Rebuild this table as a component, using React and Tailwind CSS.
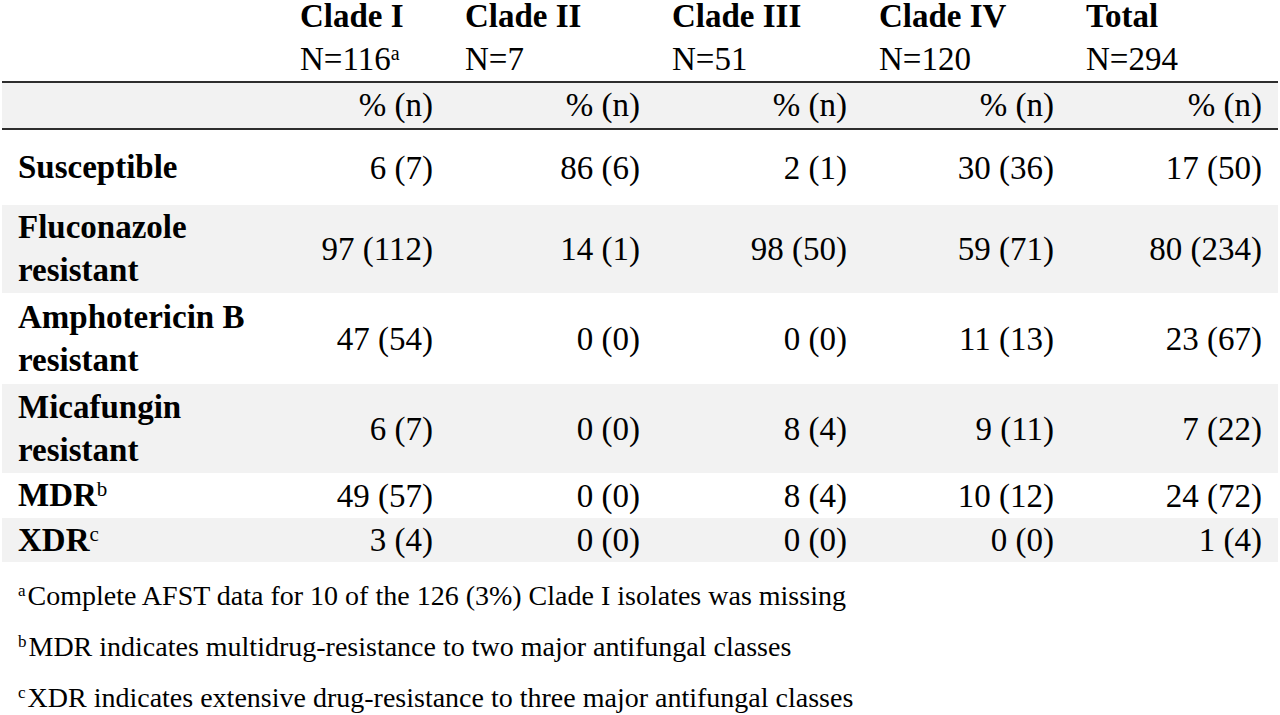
import React from "react";

const cols = ["Clade I", "Clade II", "Clade III", "Clade IV", "Total"];
const ns = ["116", "7", "51", "120", "294"];

const rows = [
  { label: ["Susceptible"], vals: ["6 (7)", "86 (6)", "2 (1)", "30 (36)", "17 (50)"], h: "h-[75px]", bg: "" },
  { label: ["Fluconazole", "resistant"], vals: ["97 (112)", "14 (1)", "98 (50)", "59 (71)", "80 (234)"], h: "h-[88px]", bg: "bg-[#f2f2f2]" },
  { label: ["Amphotericin B", "resistant"], vals: ["47 (54)", "0 (0)", "0 (0)", "11 (13)", "23 (67)"], h: "h-[91px]", bg: "" },
  { label: ["Micafungin", "resistant"], vals: ["6 (7)", "0 (0)", "8 (4)", "9 (11)", "7 (22)"], h: "h-[89px]", bg: "bg-[#f2f2f2]" },
  { label: ["MDR"], sup: "b", vals: ["49 (57)", "0 (0)", "8 (4)", "10 (12)", "24 (72)"], h: "h-[45px]", bg: "" },
  { label: ["XDR"], sup: "c", vals: ["3 (4)", "0 (0)", "0 (0)", "0 (0)", "1 (4)"], h: "h-[44px]", bg: "bg-[#f2f2f2]" },
];

const grid = "grid grid-cols-[282px_165px_207px_207px_207px_208px]";

function Note({ mark, children }) {
  return (
    <div className="whitespace-nowrap">
      <span className="relative -top-[9px] text-[17px] leading-none mr-[2px]">{mark}</span>
      {children}
    </div>
  );
}

export default function App() {
  return (
    <div className="w-[1280px] h-[715px] bg-white text-black overflow-hidden font-['Liberation_Serif','Times_New_Roman',serif]">
      <div className="mx-[2px] w-[1276px] text-[33px]">
        {/* header */}
        <div className={`${grid} h-[81px] pt-[2px]`}>
          <div />
          {cols.map((c, i) => (
            <div key={c} className="pl-4">
              <div className="font-bold leading-[28px] whitespace-nowrap">{c}</div>
              <div className="mt-[15px] leading-[28px] whitespace-nowrap">
                N={ns[i]}
                {i === 0 && <span className="relative -top-[10px] text-[20px] leading-none">a</span>}
              </div>
            </div>
          ))}
        </div>
        <div className={`${grid} h-[49px] bg-[#f2f2f2] border-y-2 border-[#2e2e2e]`}>
          <div />
          {cols.map((c) => (
            <div key={c} className="pr-4 text-right leading-[45px]">% (n)</div>
          ))}
        </div>
        {rows.map((r) => (
          <div key={r.label[0]} className={`${grid} ${r.h} ${r.bg} items-center`}>
            <div className="pl-4 font-bold leading-[43px]">
              {r.label.map((l) => (
                <div key={l} className="whitespace-nowrap">
                  {l}
                  {r.sup && (
                    <span className="relative -top-[10px] text-[21px] font-normal leading-none">{r.sup}</span>
                  )}
                </div>
              ))}
            </div>
            {r.vals.map((v, i) => (
              <div key={i} className="pr-4 text-right leading-[44px] whitespace-nowrap">{v}</div>
            ))}
          </div>
        ))}
      </div>
      <div className="mt-[8px] pl-[18px] text-[28px] leading-[51px]">
        <Note mark="a">Complete AFST data for 10 of the 126 (3%) Clade I isolates was missing</Note>
        <Note mark="b">MDR indicates multidrug-resistance to two major antifungal classes</Note>
        <Note mark="c">XDR indicates extensive drug-resistance to three major antifungal classes</Note>
      </div>
    </div>
  );
}
